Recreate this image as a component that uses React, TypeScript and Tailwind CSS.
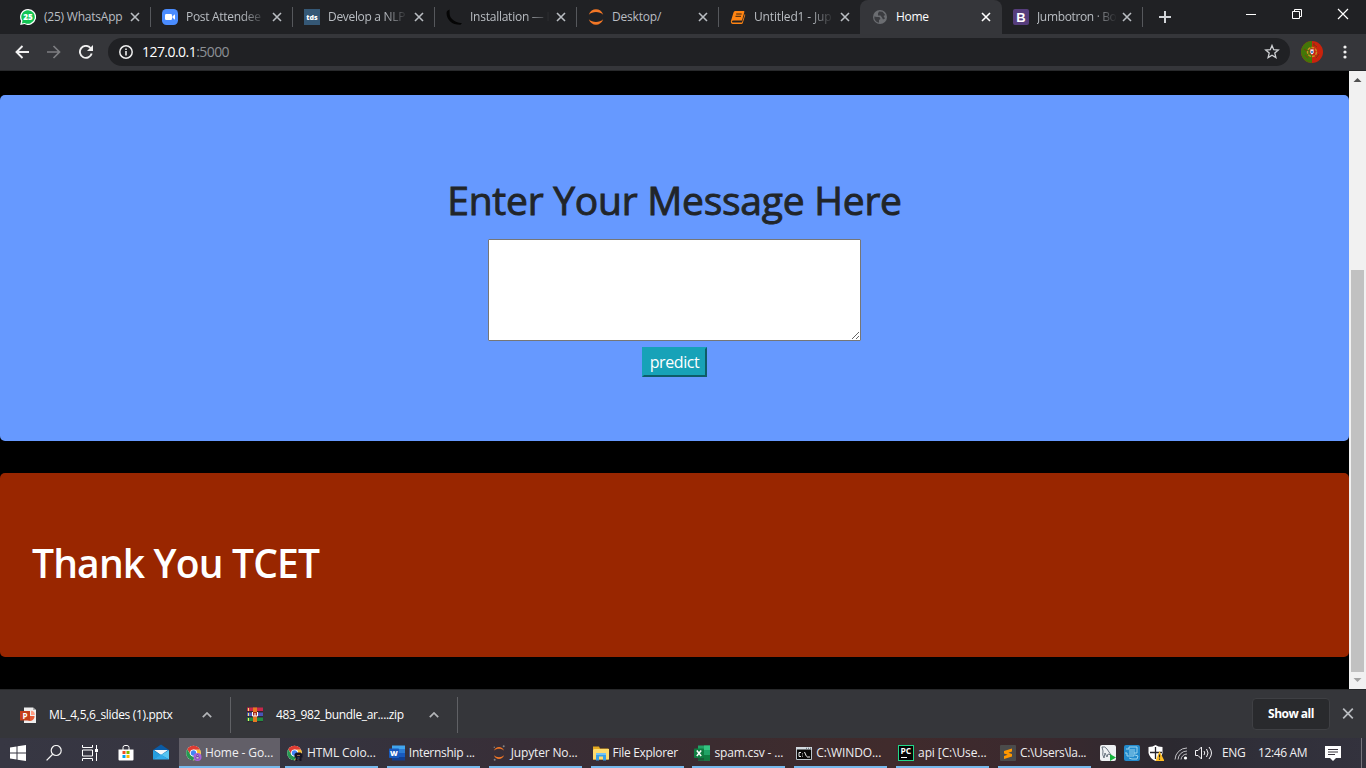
import type { ReactNode } from "react";

type IconProps = { className?: string; children: ReactNode };

function Icon({ className = "", children }: IconProps) {
  return (
    <svg viewBox="0 0 16 16" fill="none" className={`block h-4 w-4 shrink-0 ${className}`}>
      {children}
    </svg>
  );
}

function WhatsAppIcon() {
  return (
    <Icon>
      <path d="M8 0a8 8 0 1 1-3.6 15.1L.2 16l.9-4A8 8 0 0 1 8 0Z" fill="#fff" />
      <path d="M8 1.2A6.8 6.8 0 1 1 4.6 13.900l-2.800.6.7-2.700A6.800 6.800 0 0 1 8 1.200Z" fill="#12c453" />
      <text x="8" y="10.900" textAnchor="middle" fontSize="8" fontWeight="800" fill="#fff" fontFamily="Open Sans, sans-serif">25</text>
    </Icon>
  );
}
function ZoomIcon() {
  return (
    <Icon>
      <rect width="16" height="16" rx="4.5" fill="#4a8cff" />
      <rect x="3" y="5" width="7" height="6" rx="1.2" fill="#fff" />
      <path d="m10.500 7.200 2.500-1.900v5.400l-2.500-1.900Z" fill="#fff" />
    </Icon>
  );
}
function TdsIcon() {
  return (
    <Icon>
      <rect width="16" height="16" fill="#355876" />
      <text x="8" y="10.600" textAnchor="middle" fontSize="7" fontWeight="800" fill="#fff" fontFamily="Open Sans, sans-serif">tds</text>
    </Icon>
  );
}
function FlaskIcon() {
  return (
    <Icon>
      <path d="M1 2 3.500.5 3.600 5c.6 4.500 4 8 12.400 9.300l-1.500 1.500C6 16 .800 11 .500 4Z" fill="#050505" />
    </Icon>
  );
}
function JupyterIcon() {
  return (
    <Icon>
      <path d="M.8 5.800C3.200-1.500 12.800-1.500 15.200 5.800 11.500 2.200 4.500 2.200.8 5.800Z" fill="#f37726" />
      <path d="M.8 10.200c2.400 7.300 12 7.300 14.400 0-3.700 3.600-10.700 3.600-14.400 0Z" fill="#f37726" />
    </Icon>
  );
}
function JupyterAppIcon() {
  return (
    <Icon>
      <path d="M3 5.800C4.500.8 11.500.8 13 5.800 10.500 3.200 5.500 3.200 3 5.800Z" fill="#f37726" />
      <path d="M3 10.200c1.500 5 8.500 5 10 0-2.500 2.600-7.500 2.600-10 0Z" fill="#f37726" />
      <g fill="#858585">
        <circle cx="12.700" cy="1.200" r="1" />
        <circle cx="3.300" cy="2.200" r=".7" />
        <circle cx="3.700" cy="14.700" r="1" />
      </g>
    </Icon>
  );
}
function BookIcon() {
  return (
    <Icon>
      <path d="M5 2h8.500c.8 0 1 .5.800 1.200L12 11.500H3.500Q2 11.600 1.800 12.700q.2.800 1 .8H12L14.800 5l.5.800-2.500 8.200q-.4.900-1.300.9H2.500Q.8 14.600.8 12.500L3.500 3.500Q4 2 5 2Z" fill="#ff8412" />
      <path d="M6.200 5h5.500M5.500 7.300h5.500" stroke="#3a2410" strokeWidth="1" />
    </Icon>
  );
}
function GlobeIcon() {
  return (
    <Icon>
      <circle cx="8" cy="8" r="7" fill="#6b6d71" />
      <path d="M2.300 7.500 5 8h2.500l1 2L7 11v2.800Q2 12.500 2.300 7.500ZM7 2.600 10.500 2.800 13.300 6 11.500 7 13 9.500 11 10.500 10 8.500 8.500 6.500H6V4.500Z" fill="#3b3c40" />
    </Icon>
  );
}
function BootstrapIcon() {
  return (
    <Icon>
      <rect width="16" height="16" rx="2" fill="#563d7c" />
      <text x="8" y="12.800" textAnchor="middle" fontSize="13" fontWeight="800" fill="#fff" fontFamily="Liberation Sans, sans-serif">B</text>
    </Icon>
  );
}
function PowerpointIcon() {
  return (
    <Icon>
      <path d="M4 .5h9L16 3v13H4Z" fill="#eee" />
      <path d="M13 .5V3h3" fill="#aaa" />
      <path d="M10 5v4h4.500A4.500 4.500 0 1 1 10 5Z" fill="#e65b35" />
      <path d="M11 3.800A4 4 0 0 1 14.800 8H11Z" fill="#ff9c82" />
      <rect y="4" width="10" height="9.500" fill="#c43e1c" />
      <text x="5" y="11.500" textAnchor="middle" fontSize="8" fontWeight="700" fill="#fff" fontFamily="Open Sans, sans-serif">P</text>
    </Icon>
  );
}
function ArchiveIcon() {
  return (
    <Icon>
      <path d="M0 .5h16v4.500H0Z" fill="#c8274b" />
      <path d="M0 5.500h16v4.500H0Z" fill="#4954b8" />
      <path d="M0 10.500h16V15H0Z" fill="#238b42" />
      <path d="M0 4.600h16M0 9.600h16M0 14.600h16" stroke="#30202e" />
      <path d="M1.500 1v3M1.500 6v3M1.500 11v3" stroke="#eee568" />
      <path d="M6 .5h4V15H6Z" fill="#e77920" />
      <path d="M5.500 5h5v4.500h-5Z" fill="#a5291c" />
      <path d="M5.500 5v4h5V5M8 6v3" stroke="#fff" />
    </Icon>
  );
}
function ChromeIcon({ badge }: { badge: "purple" | "dark" }) {
  return (
    <Icon className="overflow-visible">
      <circle cx="7.500" cy="8" r="7.300" fill="#fff" />
      <path d="M1.200 4.300A7.300 7.300 0 0 1 14 4.700H7.500a3.400 3.400 0 0 0-3.100 4.500Z" fill="#df3c32" />
      <path d="M14 4.700A7.300 7.300 0 0 1 7.200 15.300l3.200-5.400A3.400 3.400 0 0 0 9.500 4.700Z" fill="#fbbd2d" />
      <path d="M1.200 4.300 4.600 10a3.400 3.400 0 0 0 5.500.3l-2.900 5A7.300 7.300 0 0 1 1.200 4.300Z" fill="#249850" />
      <circle cx="7.500" cy="8" r="3.400" fill="#fff" />
      <circle cx="7.500" cy="8" r="2.700" fill="#4285f4" />
      {badge === "purple" ? (
        <>
          <circle cx="11.500" cy="12" r="4" fill="#a663da" />
          <path d="M10 13.800V12h3v1.800ZM11 9.500h1v2h-1Z" fill="#fff" stroke="#59317a" strokeWidth=".6" />
        </>
      ) : (
        <>
          <path d="M7.500 9 9.500 7.500h4L15.500 9v3.500h-1V16h-2v-1.500h-2V16h-2v-3.500h-1Z" fill="#171422" />
          <path d="M10 10.500h3" stroke="#b77b50" strokeWidth=".8" />
          <path d="M10.500 13h2" stroke="#4a6fc0" strokeWidth=".8" />
        </>
      )}
    </Icon>
  );
}
function WordIcon() {
  return (
    <Icon>
      <path d="M3 .5h13V4H3Z" fill="#41a5ee" />
      <path d="M3 4h13v4H3Z" fill="#2b7cd3" />
      <path d="M3 8h13v4H3Z" fill="#185abd" />
      <path d="M3 12h13v3.500H3Z" fill="#103f91" />
      <rect y="3.500" width="10" height="9.500" rx=".7" fill="#185abd" />
      <text x="5" y="11" textAnchor="middle" fontSize="7.500" fontWeight="800" fill="#fff" fontFamily="Open Sans, sans-serif">W</text>
    </Icon>
  );
}
function FolderIcon() {
  return (
    <Icon>
      <path d="M0 1.500h6l1 2h8.500v11H0Z" fill="#e5a91f" />
      <path d="M1 4h15v10.500H0V5Z" fill="#ffdc6c" />
      <path d="M3 8h10v7.500h-3v-4H6v4H3Z" fill="#39a0e6" />
      <path d="M3 8h10v2H3Z" fill="#72c3f4" />
    </Icon>
  );
}
function ExcelIcon() {
  return (
    <Icon>
      <path d="M4 .5h12v15H4Z" fill="#21a366" />
      <path d="M10 .5h6V5h-6Z" fill="#33c481" />
      <path d="M4 8h6v7.500H4Z" fill="#185c37" />
      <path d="M10 10h6v5.500h-6Z" fill="#107c41" />
      <rect y="3.500" width="10" height="9.500" rx=".7" fill="#107c41" />
      <path d="m2.800 5.500 4.400 5.500M7.200 5.500 2.800 11" stroke="#fff" strokeWidth="1.500" />
    </Icon>
  );
}
function ConsoleIcon() {
  return (
    <Icon>
      <path d="M.5 2.500h15v12H.5Z" fill="#080808" stroke="#bcc4cb" />
      <path d="M0 2h16v2.500H0Z" fill="#d3dae0" />
      <path d="M10 3.300h1M12 3.300h1M14 3.300h1" stroke="#58656e" />
      <path d="M5 7.500H3v4h2M6.500 8.500v.8M6.500 10.700v.8M8.500 7l2 4.500M11 12h3" stroke="#eee" />
    </Icon>
  );
}
function PycharmIcon() {
  return (
    <Icon>
      <rect x=".5" y=".5" width="15" height="15" fill="#050505" stroke="#21d789" />
      <text x="7.800" y="8.900" textAnchor="middle" fontSize="8.500" fontWeight="700" fill="#fff" fontFamily="Open Sans, sans-serif">PC</text>
      <path d="M3 12.500h6" stroke="#fff" />
    </Icon>
  );
}
function SublimeIcon() {
  return (
    <Icon>
      <rect width="16" height="16" rx="1" fill="#4b4b4b" />
      <path d="m4 6 8-2.500v3L8.300 7.700 12 9v2.500l-8 2.500v-3l3.700-1.200L4 8.500Z" fill="#ff9800" />
    </Icon>
  );
}

type TabInfo = { title: string; icon: ReactNode; text: string; box?: string; line?: boolean };
const fade = "[mask-image:linear-gradient(to_right,black_56px,transparent_80px)]";
const tabs: TabInfo[] = [
  { title: "(25) WhatsApp", icon: <WhatsAppIcon />, text: "tracking-[-0.22px]", line: true },
  { title: "Post Attendee", icon: <ZoomIcon />, text: `tracking-[-0.3px] ${fade}`, line: true },
  { title: "Develop a NLP", icon: <TdsIcon />, text: `tracking-[-0.32px] ${fade}`, line: true },
  { title: "Installation — I", icon: <FlaskIcon />, text: `tracking-[-0.25px] ${fade}`, line: true },
  { title: "Desktop/", icon: <JupyterIcon />, text: "tracking-[-0.2px]", line: true },
  { title: "Untitled1 - Jup", icon: <BookIcon />, text: `tracking-[-0.15px] ${fade}` },
  { title: "Home", icon: <GlobeIcon />, text: "tracking-[-0.3px]", box: "w-[142px] pl-3 pr-[11px] rounded-t-lg bg-[#35363a] text-white" },
  { title: "Jumbotron · Bo", icon: <BootstrapIcon />, text: `tracking-[-0.35px] ${fade}`, box: "w-[140px] pl-[11px] pr-[10px] text-[#b9bdc2]", line: true },
];

function BrowserTab({ tab }: { tab: TabInfo }) {
  return (
    <div className={`relative flex h-[34px] shrink-0 items-center ${tab.box ?? "w-[142px] pr-[10px] pl-3 text-[#b9bdc2]"}`}>
      {tab.icon}
      <div className={`ml-2 text-[12px] leading-[18px] whitespace-nowrap ${tab.text}`}>{tab.title}</div>
      <svg viewBox="0 0 10 10" className="ml-auto h-[10px] w-[10px] shrink-0" fill="none" stroke="currentColor" strokeWidth="1.600">
        <path d="m1 1 8 8M9 1 1 9" />
      </svg>
      {tab.line && <div className="absolute top-[7px] right-[-1px] h-5 w-px bg-[#56585c]" />}
    </div>
  );
}

function BrowserChrome() {
  return (
    <header className="h-[71px] shrink-0 bg-[#35363a]">
      <div className="flex h-[34px] bg-[#202124] pl-2">
        {tabs.map((tab) => <BrowserTab key={tab.title} tab={tab} />)}
        <svg viewBox="0 0 12 12" className="mt-[11px] ml-[17px] h-3 w-3" stroke="#d1d4d8" strokeWidth="2"><path d="M6 0v12M0 6h12" /></svg>
        <div className="ml-auto flex h-7 text-white">
          <svg viewBox="0 0 46 28" className="h-7 w-[46px]" stroke="currentColor"><path d="M18 14.500h10" /></svg>
          <svg viewBox="0 0 46 28" className="h-7 w-[46px]" fill="none" stroke="currentColor"><path d="M18.500 11.500h7v7h-7ZM20.500 11v-1.500h7v7H26" /></svg>
          <svg viewBox="0 0 46 28" className="h-7 w-[46px]" fill="none" stroke="currentColor" strokeWidth="1.200"><path d="m18 9 10 10M28 9 18 19" /></svg>
        </div>
      </div>
      <div className="flex h-[37px] items-start border-b border-[#28292b] pt-1">
        <div className="flex h-7 w-[108px] items-center gap-[18px] pl-[15px]">
          <svg viewBox="0 0 14 14" className="h-[14px] w-[14px]" fill="none" stroke="#f1f1f1" strokeWidth="1.900"><path d="M14 7H1.500M7.500 1 1.500 7l6 6" /></svg>
          <svg viewBox="0 0 14 14" className="h-[14px] w-[14px]" fill="none" stroke="#7d7e81" strokeWidth="1.700"><path d="M0 7h12.500M6.500 1l6 6-6 6" /></svg>
          <svg viewBox="0 0 14 14" className="h-[14px] w-[14px]" fill="none" stroke="#f1f1f1" strokeWidth="1.900"><path d="M12.700 8.500A6 6 0 1 1 11.500 3" /><path d="M14 0v6H8Z" fill="#f1f1f1" stroke="none" /></svg>
        </div>
        <div className="flex h-7 w-[1182px] items-center rounded-full bg-[#202124] pl-[11px]">
          <svg viewBox="0 0 14 14" className="h-[14px] w-[14px]" fill="none" stroke="#eee"><circle cx="7" cy="7" r="6.200" strokeWidth="1.500" /><path d="M7 6v4.500M7 3.500V5" strokeWidth="1.600" /></svg>
          <span className="ml-[9px] text-[14px] leading-7 tracking-[-0.55px] text-white">127.0.0.1<span className="text-[#8c9095]">:5000</span></span>
          <svg viewBox="0 0 16 16" className="mr-[10px] ml-auto h-4 w-4" fill="none" stroke="#cfd1d4" strokeWidth="1.300"><path d="m8 1.500 1.700 4.200 4.600.4-3.500 3 1.100 4.500L8 11.200l-3.900 2.400 1.100-4.500-3.500-3 4.600-.4Z" /></svg>
        </div>
        <svg viewBox="0 0 22 22" className="mt-[3px] ml-[11px] h-[22px] w-[22px]">
          <circle cx="11" cy="11" r="11" fill="#c9230c" />
          <path d="M11 0v22a11 11 0 0 1 0-22" fill="#437708" />
          <circle cx="11" cy="11" r="4.500" fill="none" stroke="#c98f20" strokeWidth="1.500" strokeDasharray="3 1" />
          <path d="M9 8h4v4l-2 2-2-2Z" fill="#eee" stroke="#c72c24" strokeWidth=".8" />
          <path d="M10 10h2v2h-2Z" fill="#538bc7" />
          <path d="m3 8 3 2M12 3l4 3M15 17l3-4M13 2v3M4 14l3 3" stroke="#7c3c0b" />
        </svg>
        <svg viewBox="0 0 4 14" className="mt-[7px] ml-5 h-[14px] w-1" fill="#f1f1f1"><circle cx="2" cy="2" r="1.600" /><circle cx="2" cy="7" r="1.600" /><circle cx="2" cy="12" r="1.600" /></svg>
      </div>
    </header>
  );
}

function PageContent() {
  return (
    <div className="flex h-[618px] shrink-0 bg-black">
      <main className="flex w-[1349px] flex-col gap-8 pt-6">
        <section className="flex h-[346px] flex-col items-center rounded-[5px] bg-[#6699ff] pt-[81px]">
          <h1 className="h-12 text-[39px] leading-[48px] font-normal tracking-[-0.25px] whitespace-nowrap text-[#212529] [-webkit-text-stroke:0.9px_#212529]">Enter Your Message Here</h1>
          <textarea aria-label="Message" className="mt-[15px] block h-[102px] w-[373px] shrink-0 resize rounded-[1px] border border-[#767676] bg-white" />
          <button className="mt-[6px] h-[30px] w-[65px] border-2 border-t-[#17a2b8] border-r-[#0d5d69] border-b-[#0d5d69] border-l-[#17a2b8] bg-[#17a2b8] text-[16px] leading-6 tracking-[-0.4px] text-white">predict</button>
        </section>
        <section className="h-[184px] rounded-[5px] bg-[#992600] px-8 pt-[66px]">
          <h1 className="text-[39px] leading-[48px] font-semibold tracking-[-0.85px] whitespace-nowrap text-white">Thank You TCET</h1>
        </section>
      </main>
      <div className="flex w-[17px] flex-col items-center bg-[#f1f1f1]">
        <svg viewBox="0 0 17 17" className="h-[17px] w-[17px]" fill="#505050"><path d="m8.500 7 4 4h-8Z" /></svg>
        <div className="mt-[182px] h-[402px] w-[13px] bg-[#c1c1c1]" />
        <svg viewBox="0 0 17 17" className="h-[17px] w-[17px]" fill="#a3a3a3"><path d="m8.500 10-4-4h8Z" /></svg>
      </div>
    </div>
  );
}

function Chevron() {
  return <svg viewBox="0 0 10 6" className="h-[6px] w-[10px] shrink-0" fill="none" stroke="#b4b6b9" strokeWidth="1.700"><path d="m.8 5.200 4.200-4.200 4.200 4.200" /></svg>;
}

function DownloadShelf() {
  return (
    <div className="flex h-[49px] shrink-0 items-center border-t border-[#28292b] bg-[#35363a] text-[12px] text-white">
      <div className="mt-px flex h-9 w-[231px] items-center border-r border-[#606165] pl-5">
        <PowerpointIcon />
        <span className="ml-[13px] w-[153px] tracking-[-0.33px] whitespace-nowrap">ML_4,5,6_slides (1).pptx</span>
        <Chevron />
      </div>
      <div className="mt-px flex h-9 w-[227px] items-center border-r border-[#606165] pl-4">
        <ArchiveIcon />
        <span className="ml-[13px] w-[153px] tracking-[-0.36px] whitespace-nowrap">483_982_bundle_ar....zip</span>
        <Chevron />
      </div>
      <button className="mr-[13px] ml-auto h-[32px] w-[78px] rounded-[4px] border border-[#3f4044] bg-[#292a2d] pb-px font-bold tracking-[-0.5px]">Show all</button>
      <svg viewBox="0 0 10 10" className="mr-[13px] h-[10px] w-[10px] overflow-visible" fill="none" stroke="#b9bcc0" strokeWidth="1.700"><path d="m.2-.3 9.600 9.600M9.800-.3.200 9.300" /></svg>
    </div>
  );
}

type TaskInfo = { label: string; icon: ReactNode; tracking: string };
const tasks: TaskInfo[] = [
  { label: "HTML Colo...", icon: <ChromeIcon badge="dark" />, tracking: "tracking-[-0.12px]" },
  { label: "Internship ...", icon: <WordIcon />, tracking: "tracking-[-0.3px]" },
  { label: "Jupyter No...", icon: <JupyterAppIcon />, tracking: "tracking-[-0.15px]" },
  { label: "File Explorer", icon: <FolderIcon />, tracking: "tracking-[-0.3px]" },
  { label: "spam.csv - ...", icon: <ExcelIcon />, tracking: "tracking-[-0.15px]" },
  { label: "C:\\WINDO...", icon: <ConsoleIcon />, tracking: "tracking-[-0.1px]" },
  { label: "api [C:\\Use...", icon: <PycharmIcon />, tracking: "tracking-[-0.1px]" },
  { label: "C:\\Users\\la...", icon: <SublimeIcon />, tracking: "tracking-[-0.3px]" },
];

function Taskbar() {
  return (
    <footer className="flex h-[30px] shrink-0 bg-[linear-gradient(90deg,#373743_0%,#35333e_25%,#382e37_38%,#3b2c30_52%,#402b2c_65%,#3b292e_76%,#2b2930_86%,#302f39_92%,#33323d_100%)] text-[12px] text-[#f0eff1]">
      <div className="flex w-[179px] items-center pl-[10px]">
        <Icon><path d="m0 2.400 6.500-.9v6H0ZM7.500 1.300 16 .1v7.400H7.500ZM0 8.500h6.500v6L0 13.600ZM7.500 8.500H16v7.400l-8.500-1.200Z" fill="#fff" /></Icon>
        <Icon className="ml-5"><circle cx="10.200" cy="5.500" r="5" stroke="#f3f3f3" strokeWidth="1.200" /><path d="M6.700 9.300.6 15.400" stroke="#f3f3f3" strokeWidth="1.300" /></Icon>
        <Icon className="ml-5"><path d="M.5 0v2.500h10V0M.5 16v-2.500h10V16M.5 5h10v6H.5ZM14.500 0v4M14.500 7.500V16" stroke="#fff" /><path d="M13 4h3v3h-3Z" fill="#fff" /></Icon>
        <Icon className="ml-5"><path d="M5 5V2.500Q5 .5 7 .5h2q2 0 2 2V5" stroke="#fff" /><path d="M.5 4.500h15v10q0 1-1 1h-13q-1 0-1-1Z" fill="#fff" /><path d="M4.500 6h3v3h-3Z" fill="#f25022" /><path d="M8.500 6h3v3h-3Z" fill="#7fba00" /><path d="M4.500 10h3v3h-3Z" fill="#00a4ef" /><path d="M8.500 10h3v3h-3Z" fill="#ffb900" /></Icon>
        <Icon className="-mt-[2px] ml-[19px]"><path d="M0 6 8 .5 16 6v9H0Z" fill="#0a5ba6" /><path d="M1 6h14L8 11Z" fill="#f3f7f9" /><path d="m0 6 8 5-8 4.500Z" fill="#249dde" /><path d="m16 6-8 5 8 4.500Z" fill="#57c5f1" /><path d="m0 15.500 8-5 8 5Z" fill="#32abea" /></Icon>
      </div>
      <div className="mr-[5px] flex w-[101px] items-center border-b-2 border-[#76b9ed] bg-[#625f68] pt-[2px] pl-[7px]">
        <ChromeIcon badge="purple" /><span className="ml-[3px] tracking-[-0.1px] whitespace-nowrap">Home - Go...</span>
      </div>
      <div className="flex w-[806px] justify-between">
        {tasks.map((task) => (
          <div key={task.label} className="flex w-[93px] items-center border-b-2 border-[#76b9ed] pt-[2px] pl-[2px]">
            {task.icon}<span className={`ml-1 whitespace-nowrap ${task.tracking}`}>{task.label}</span>
          </div>
        ))}
      </div>
      <div className="ml-[9px] flex grow items-center">
        <Icon><rect width="16" height="16" rx="2" fill="#eef1f3" /><path d="M2 2q3-1 5 2l4 6-3-1-1 3-2-4-1 5q-2-3-1-7Z" stroke="#5b6874" strokeWidth=".9" /><path d="m10 9 6 3.500-6 3.500Z" fill="#14b53b" /></Icon>
        <Icon className="ml-2"><rect width="16" height="16" rx="2" fill="#238bcd" /><path d="M2 4h3V2h8v6h-3v3H3V8H1M5 5h6M5 7h6M5 9h4M11 10l3 1-1 3H8l-3-1" stroke="#9cd4ed" strokeWidth="1" /></Icon>
        <Icon className="ml-2"><path d="M7.500 0Q10 2 14.500 2v6q-1 5-7 8-6-3-7-8V2Q5 2 7.500 0Z" fill="#fff" /><path d="M7.500 2v12M2 7.500h12" stroke="#25232a" strokeWidth="1.300" /><path d="m11.500 6 5 10h-9Z" fill="#ffbd22" /><path d="M11.500 9.500v3M11.500 13.500v1.200" stroke="#222" strokeWidth="1.200" /></Icon>
        <svg viewBox="0 0 14 16" className="ml-[10px] h-4 w-[14px]" fill="none" stroke="#c2c1c5"><path d="M1 14.500A12 12 0 0 1 13 3M4 14.500A9 9 0 0 1 13 6M7 14.500A6 6 0 0 1 13 9" /><circle cx="11.500" cy="13" r="1.600" fill="#fff" stroke="none" /></svg>
        <svg viewBox="0 0 18 16" className="ml-[7px] h-4 w-[18px]" fill="none" stroke="#f3f2f5"><path d="M.5 5.500H3l3.500-3.500v12L3 10.500H.5ZM9 6q1.500 2 0 4M11.500 4q3 4 0 8M14 2q5 6 0 12" /></svg>
        <span className="ml-[9px] w-[36px] tracking-[-0.3px]">ENG</span>
        <span className="w-[67px] tracking-[-0.35px] whitespace-nowrap">12:46 AM</span>
        <Icon><path d="M0 1h16v12h-5l-3 3-3-3H0Z" fill="#fff" /><path d="M3 4.500h10M3 7h10M3 9.500h7" stroke="#39343d" /></Icon>
        <div className="mr-1 ml-auto h-[30px] w-px bg-[#77747c]" />
      </div>
    </footer>
  );
}

export default function App() {
  return (
    <div className="flex h-[768px] w-[1366px] flex-col overflow-hidden bg-black font-['Open_Sans','Noto_Sans',sans-serif]">
      <BrowserChrome />
      <PageContent />
      <DownloadShelf />
      <Taskbar />
    </div>
  );
}
